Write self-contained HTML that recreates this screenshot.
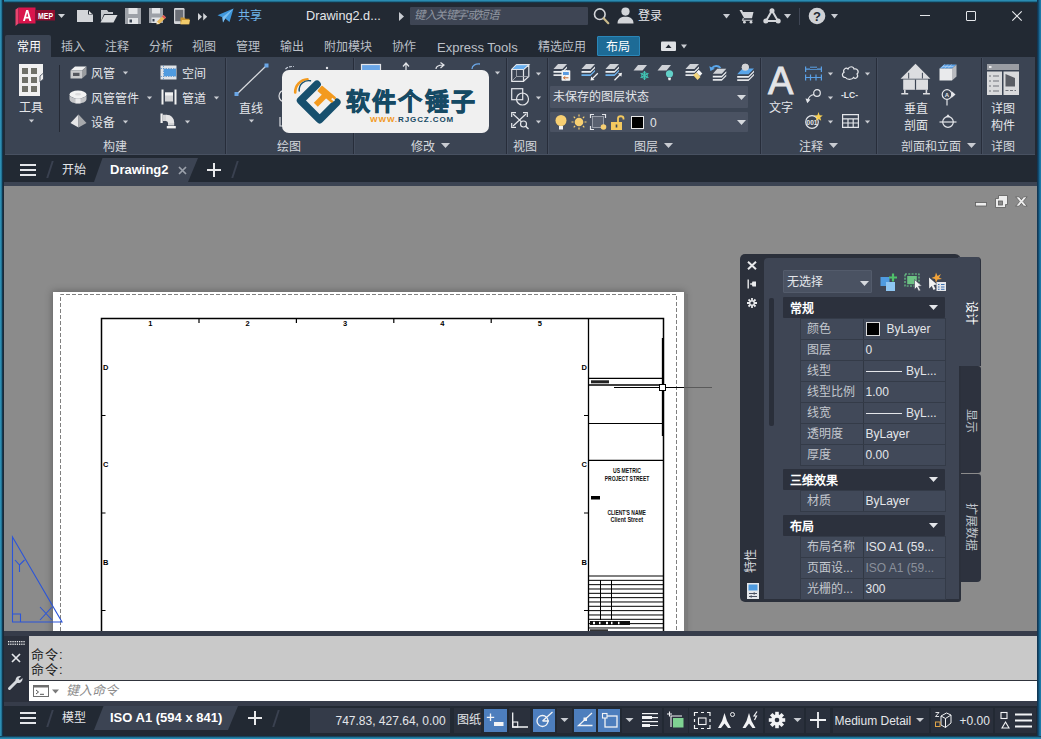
<!DOCTYPE html>
<html lang="zh-CN">
<head>
<meta charset="utf-8">
<title>Drawing2.dwg</title>
<style>
*{box-sizing:border-box;margin:0;padding:0}
html,body{width:1041px;height:739px;overflow:hidden;background:#222933}
body{font-family:"Liberation Sans",sans-serif;font-size:13px;color:#e6e8ec;position:relative}
.abs{position:absolute}
#win{position:absolute;left:0;top:0;width:1041px;height:739px;background:#222933;overflow:hidden}
#bT{left:0;top:0;width:1041px;height:3px;background:linear-gradient(to bottom,#2a8cb2 0,#2a8cb2 35%,#0f3f58 70%,#222933 100%)}
#bL{left:0;top:0;width:4px;height:739px;background:linear-gradient(to right,#2f93b8 0,#2a89ae 30%,#0f415c 55%,#18293a 80%,#222933 100%)}
#bR{left:1036.5px;top:0;width:4.5px;height:739px;background:linear-gradient(to right,#15304a 0,#0f3d5c 25%,#1a6a97 65%,#1f7fae 100%)}
#bB{left:0;top:736px;width:1041px;height:3px;background:linear-gradient(to bottom,#1b3347 0,#14506e 30%,#2583aa 60%,#2a8cb2 100%)}
#ribbon{left:5px;top:57px;width:1030px;height:97.500px;background:#3b4453}
#filetabs{left:4px;top:156px;width:1033px;height:26px;background:#222933}
#ftline{left:4px;top:182px;width:1033px;height:4px;background:#3c4453}
#draw{left:4px;top:186px;width:1033px;height:445px;background:#8b8b8b;overflow:hidden}
#cmd{left:3px;top:631px;width:1034px;height:75px;background:#363c4a}
#status{left:3px;top:706px;width:1034px;height:30px;background:#222933}

#title{left:3px;top:2px;width:1034px;height:33px;background:#222933}
.tt{position:absolute;white-space:nowrap;line-height:1}
.ico{position:absolute;overflow:visible}
#search{left:410px;top:6.5px;width:177.500px;height:18.500px;background:#3e4554;border-radius:1px}
#search span{position:absolute;left:4px;top:3.500px;font-size:11.500px;font-style:italic;color:#8f95a0;line-height:1;letter-spacing:-0.500px}
#rtabs{left:3px;top:35px;width:1034px;height:22px;background:#222933}
.rt{position:absolute;margin-top:1px;font-size:12px;color:#bcc0c8;line-height:1;white-space:nowrap}
#rtA{left:5px;top:35px;width:46px;height:22px;background:#3b4453;border-radius:2px 2px 0 0}
#rtL{left:597px;top:36px;width:43px;height:20px;background:#1d6b96;border:1px solid #2a86b8;border-radius:1px}

.rl{position:absolute;font-size:12px;color:#e4e6ea;line-height:1;white-space:nowrap}
.pt{position:absolute;top:140.5px;font-size:12px;color:#d6d9de;line-height:1;white-space:nowrap}
.sep{position:absolute;top:58px;width:2px;height:96px;background:linear-gradient(to right,#272d3a 0,#272d3a 50%,#444d5d 50%,#444d5d 100%)}
.dd{position:absolute;width:7px;height:4px}
.lyd{position:absolute;left:550px;width:198px;background:#4a5262;border-radius:1px}

.ham{position:absolute;width:16px;height:12px}
.ham i{position:absolute;left:0;width:16px;height:2px;background:#e4e6ea}
.slash{position:absolute;width:1.5px;height:17px;background:#3a4150;transform:skewX(-18deg)}

#pal{left:739.5px;top:254px;width:221.5px;height:347.700px;background:#2b303b;border-radius:5px 6px 3px 5px}
#palbody{left:764px;top:257.500px;width:195px;height:341.500px;background:#3e4554;border-radius:4px 0 0 0}
#ptab1{left:958px;top:257px;width:23px;height:109px;background:#3e4554;border-radius:0 4px 0 0;border-right:1px solid #2d323e}
#ptab2{left:960.500px;top:366px;width:20.500px;height:107px;background:#2d323e;border-radius:0 3px 3px 0}
#ptab3{left:960.500px;top:474px;width:20.500px;height:108px;background:#2d323e;border-radius:0 3px 4px 0}
.vt{position:absolute;font-size:12px;line-height:1;white-space:nowrap;color:#d6d9de}
.ph{position:absolute;left:783px;width:162px;height:21px;background:#2c313d;border-radius:1px}
.ph b{position:absolute;left:7px;top:5.5px;font-size:12px;line-height:1;color:#fff;font-weight:700}
.pr{position:absolute;left:801px;width:144px;height:20px;background:#414959;box-shadow:0 0 0 1px #343b48}
.pr i{position:absolute;left:61.5px;top:0;width:1px;height:20px;background:#313844}
.pr span{position:absolute;left:6px;top:3.5px;font-size:12px;line-height:1;color:#c3c7ce;white-space:nowrap;font-style:normal}
.pr em{position:absolute;left:64.5px;top:4px;font-size:12px;line-height:1;color:#e4e6ea;white-space:nowrap;font-style:normal}

.sbh{position:absolute;top:709px;height:23px;background:#4d7ebd}
.sbg{position:absolute;top:708px;height:25px;background:#2a303c}
.st{position:absolute;font-size:12px;line-height:1;color:#e4e6ea;white-space:nowrap}
</style>
</head>
<body>
<div id="win">

<div id="title" class="abs"></div>
<!-- app logo -->
<svg class="ico" style="left:14px;top:6px" width="56" height="22" viewBox="0 0 56 22">
 <path d="M1.5 3.5 L4.5 1.5 L4.5 17.5 L1.5 20 Z" fill="#e8446e"/>
 <rect x="4.5" y="1.5" width="17" height="16" fill="#d9154c"/>
 <path d="M21.5 4 H41 V14.5 H21.5 Z" fill="#8e0d30"/>
 <path d="M9 15 L12.2 4 H14.2 L17.4 15 H15.4 L14.7 12.5 H11.6 L10.9 15 Z M12.1 10.8 H14.3 L13.2 6.6 Z" fill="#fff"/>
 <text x="24" y="12.6" font-family="Liberation Sans, sans-serif" font-weight="700" font-size="8.5" fill="#fff" textLength="15" lengthAdjust="spacingAndGlyphs">MEP</text>
 <path d="M44 8 H51 L47.5 12 Z" fill="#d0d3d8"/>
</svg>
<!-- new -->
<svg class="ico" style="left:77px;top:10px" width="17" height="13" viewBox="0 0 17 13"><path d="M0 0 H11 L16 4.5 V12 H0 Z" fill="#d3d5d9"/><path d="M11 0 V4.5 H16 Z" fill="#222933"/><path d="M12 1 L15 4 H12 Z" fill="#e9eaec"/></svg>
<!-- open -->
<svg class="ico" style="left:100px;top:10px" width="18" height="13" viewBox="0 0 18 13"><path d="M1 0 H7 L8.5 2 H13 V4 H4 L1 11 Z" fill="#c5c8cd"/><path d="M4.5 5 H17.5 L13.5 12.5 H0.5 Z" fill="#d9dbde"/></svg>
<!-- save -->
<svg class="ico" style="left:125px;top:8px" width="16" height="16" viewBox="0 0 16 16"><path d="M0 0 H16 V16 H0 Z" fill="#9da1a8"/><rect x="3.5" y="0" width="9" height="6" fill="#e3e5e8"/><rect x="3" y="10" width="10" height="6" fill="#e3e5e8"/><rect x="4.5" y="11.5" width="2.5" height="3" fill="#3b4453"/></svg>
<!-- saveas -->
<svg class="ico" style="left:149px;top:8px" width="18" height="16" viewBox="0 0 18 16"><path d="M0 0 H14 V15 H0 Z" fill="#9da1a8"/><rect x="3" y="0" width="8" height="5.5" fill="#e3e5e8"/><rect x="2.5" y="9.5" width="9" height="5.5" fill="#e3e5e8"/><rect x="3.5" y="11" width="2" height="2.5" fill="#3b4453"/><path d="M8 13.5 L14.5 7 L17 9.5 L10.5 16 L7.5 16.3 Z" fill="#e9b85a"/><path d="M13 8.5 L14.5 7 L17 9.5 L15.5 11 Z" fill="#e0525a"/><path d="M8 13.5 L10.5 16 L7.5 16.3 Z" fill="#f2e6c8"/></svg>
<!-- mobile -->
<svg class="ico" style="left:174px;top:8px" width="16" height="17" viewBox="0 0 16 17"><rect x="0" y="0" width="10.5" height="16" rx="1.2" fill="#d3d5d9"/><rect x="1.2" y="1.8" width="8.1" height="11.4" fill="#6b6f77"/><path d="M6.5 9.5 H10.5 L11.5 10.8 H15.5 V16.3 H6.5 Z" fill="#c99530"/><path d="M8 12 H16 L14.8 16.3 H6.5 Z" fill="#f3cc6c"/></svg>
<!-- >> -->
<svg class="ico" style="left:198px;top:13px" width="10" height="8" viewBox="0 0 10 8"><path d="M0 0 L4 3.8 L0 7.6 Z M5.2 0 L9.2 3.8 L5.2 7.6 Z" fill="#d3d5d9"/></svg>
<!-- share -->
<svg class="ico" style="left:217px;top:8px" width="17" height="16" viewBox="0 0 17 16"><path d="M0.5 7.2 L16.5 0.5 L12.5 14 L8.2 10.4 L6 14.5 L5.4 9.2 Z" fill="#3f97dc"/><path d="M5.4 9.2 L16.5 0.5 L8.2 10.4 L6 14.5 Z" fill="#7dbff0"/></svg>
<div class="tt" style="left:238px;top:10px;font-size:12px;color:#6fb5ea">共享</div>
<div class="tt" style="left:306px;top:10px;font-size:12.700px;color:#e4e6ea">Drawing2.d...</div>
<svg class="ico" style="left:399px;top:12px" width="6" height="9" viewBox="0 0 6 9"><path d="M0 0 L5 4.5 L0 9 Z" fill="#c9ccd2"/></svg>
<div id="search" class="abs"><span>键入关键字或短语</span></div>
<!-- magnifier -->
<svg class="ico" style="left:593px;top:7px" width="17" height="18" viewBox="0 0 17 18"><circle cx="6.8" cy="7.2" r="5.3" fill="none" stroke="#d3d5d9" stroke-width="1.6"/><path d="M10.6 11.2 L15.3 16.2" stroke="#c9b98a" stroke-width="2.2" stroke-linecap="round"/></svg>
<!-- user -->
<svg class="ico" style="left:617px;top:7px" width="17" height="17" viewBox="0 0 17 17"><circle cx="8.5" cy="4.6" r="4.1" fill="#d3d5d9"/><path d="M0.5 16.5 C0.5 11.5 4 9.8 8.5 9.8 C13 9.8 16.5 11.5 16.5 16.5 Z" fill="#d3d5d9"/></svg>
<div class="tt" style="left:638px;top:10px;font-size:12px;color:#e4e6ea">登录</div>
<svg class="ico" style="left:723px;top:14px" width="7" height="5" viewBox="0 0 7 5"><path d="M0 0 H7 L3.5 4.4 Z" fill="#c9ccd2"/></svg>
<!-- cart -->
<svg class="ico" style="left:739px;top:9px" width="16" height="15" viewBox="0 0 16 15"><path d="M0.5 1 H3 L4 3 H14.5 L13 9.2 H5.2 Z" fill="#d3d5d9"/><path d="M4.4 9 L3.6 11.2 H13.5" stroke="#d3d5d9" stroke-width="1.1" fill="none"/><circle cx="5.4" cy="13.2" r="1.4" fill="#d3d5d9"/><circle cx="12" cy="13.2" r="1.4" fill="#d3d5d9"/></svg>
<!-- autodesk A -->
<svg class="ico" style="left:763px;top:8px" width="18" height="16" viewBox="0 0 18 16"><path d="M9 2.5 L3 13 H15 Z" fill="none" stroke="#d3d5d9" stroke-width="2"/><circle cx="9" cy="2.8" r="2.5" fill="#d3d5d9"/><circle cx="2.8" cy="13" r="2.5" fill="#d3d5d9"/><circle cx="15.2" cy="13" r="2.5" fill="#d3d5d9"/></svg>
<svg class="ico" style="left:784px;top:14px" width="7" height="5" viewBox="0 0 7 5"><path d="M0 0 H7 L3.5 4.4 Z" fill="#c9ccd2"/></svg>
<div class="abs" style="left:799px;top:8px;width:1px;height:17px;background:#3e4554"></div>
<!-- help -->
<svg class="ico" style="left:808px;top:7px" width="18" height="18" viewBox="0 0 18 18"><circle cx="9" cy="9" r="8.3" fill="#cfd1d5"/><text x="9" y="13.6" text-anchor="middle" font-family="Liberation Sans, sans-serif" font-weight="700" font-size="13" fill="#222933">?</text></svg>
<svg class="ico" style="left:831px;top:14px" width="7" height="5" viewBox="0 0 7 5"><path d="M0 0 H7 L3.5 4.4 Z" fill="#c9ccd2"/></svg>
<!-- window controls -->
<div class="abs" style="left:920px;top:15px;width:10px;height:1px;background:#e4e6ea"></div>
<div class="abs" style="left:966px;top:11px;width:10px;height:10px;border:1px solid #e4e6ea;border-radius:1px"></div>
<svg class="ico" style="left:1012px;top:11px" width="10" height="10" viewBox="0 0 10 10"><path d="M0.300 0.300 L9.700 9.700 M9.700 0.300 L0.300 9.700" stroke="#eceef1" stroke-width="1.100"/></svg>

<div id="rtabs" class="abs"></div>
<div id="rtA" class="abs"></div>
<div id="rtL" class="abs"></div>
<div class="rt" style="left:17px;top:40px;color:#fff">常用</div>
<div class="rt" style="left:61px;top:40px">插入</div>
<div class="rt" style="left:105px;top:40px">注释</div>
<div class="rt" style="left:149px;top:40px">分析</div>
<div class="rt" style="left:192px;top:40px">视图</div>
<div class="rt" style="left:236px;top:40px">管理</div>
<div class="rt" style="left:280px;top:40px">输出</div>
<div class="rt" style="left:324px;top:40px">附加模块</div>
<div class="rt" style="left:392px;top:40px">协作</div>
<div class="rt" style="left:437px;top:40px;font-size:13px">Express Tools</div>
<div class="rt" style="left:538px;top:40px">精选应用</div>
<div class="rt" style="left:606px;top:40px;color:#fff">布局</div>
<svg class="ico" style="left:661px;top:41px" width="30" height="11" viewBox="0 0 30 11"><rect x="0" y="0.5" width="15" height="9.5" rx="1" fill="#dfe1e5"/><path d="M4.5 7 L7.5 3.5 L10.5 7 Z" fill="#222933"/><path d="M20 3.5 H26 L23 7.5 Z" fill="#c9ccd2"/></svg>
<div id="ribbon" class="abs"></div>
<div class="sep" style="left:225px"></div>
<div class="sep" style="left:353px"></div>
<div class="sep" style="left:506px"></div>
<div class="sep" style="left:547px"></div>
<div class="sep" style="left:760px"></div>
<div class="sep" style="left:876px"></div>
<div class="sep" style="left:981px"></div>
<div class="abs" style="left:59px;top:65px;width:1px;height:67px;background:#252a35"></div>
<svg class="ico" style="left:18px;top:64px" width="26" height="32" viewBox="0 0 26 32">
<path d="M1 0 H25 V10 L22 13 V32 H1 Z" fill="#f0f0f0"/>
<path d="M22 12 L25.5 9 V15 L22 18 Z" fill="#f0f0f0" stroke="#3b4453" stroke-width="0.8"/>
<g fill="#6f7068"><rect x="4" y="4" width="6" height="6"/><rect x="13" y="4" width="6" height="6"/><rect x="4" y="13" width="6" height="6"/><rect x="13" y="13" width="6" height="6"/><rect x="4" y="22" width="6" height="6"/><rect x="13" y="22" width="6" height="6"/></g></svg>
<div class="rl" style="left:19px;top:102px">工具</div>
<svg class="ico" style="left:28px;top:119px" width="7" height="4" viewBox="0 0 7 4"><path d="M0.900 0.500 H6.100 L3.500 3.600 Z" fill="#c9ccd2"/></svg>
<svg class="ico" style="left:70px;top:66px" width="17" height="13" viewBox="0 0 17 13"><path d="M0.5 4.5 L5 0.5 H16.5 L12 4.5 Z" fill="#f2f2f2"/><path d="M0.5 4.5 H12 V12.5 H0.5 Z" fill="#c9cacc"/><path d="M12 4.5 L16.5 0.5 V8.5 L12 12.5 Z" fill="#9a9c9f"/><rect x="3" y="6.8" width="6.5" height="3.2" fill="#55585f"/></svg>
<div class="rl" style="left:91px;top:67.5px">风管</div>
<svg class="ico" style="left:122px;top:71px" width="7" height="4" viewBox="0 0 7 4"><path d="M0.900 0.500 H6.100 L3.500 3.600 Z" fill="#c9ccd2"/></svg>
<svg class="ico" style="left:69px;top:90px" width="18" height="14" viewBox="0 0 18 14"><ellipse cx="9" cy="4.5" rx="8.5" ry="4" fill="#f2f2f2"/><path d="M0.5 4.5 V9 C0.5 12 5 13.5 9 13.5 C13 13.5 17.5 12 17.5 9 V4.5 C17.5 7 13 8.5 9 8.5 C5 8.5 0.5 7 0.5 4.5 Z" fill="#c3c4c7"/><path d="M6.5 8.3 V13.3 H11.5 V8.3 Z" fill="#e9e9ea"/><ellipse cx="9" cy="4.3" rx="3" ry="1.3" fill="#dcdcdd"/></svg>
<div class="rl" style="left:91px;top:92.5px">风管管件</div>
<svg class="ico" style="left:146px;top:96px" width="7" height="4" viewBox="0 0 7 4"><path d="M0.900 0.500 H6.100 L3.500 3.600 Z" fill="#c9ccd2"/></svg>
<svg class="ico" style="left:70px;top:114px" width="17" height="14" viewBox="0 0 17 14"><path d="M8.5 0.5 L0.5 9 L8.5 13.5 Z" fill="#e6e6e7"/><path d="M8.5 0.5 L16.5 9 L8.5 13.5 Z" fill="#a7a9ac"/></svg>
<div class="rl" style="left:91px;top:116.5px">设备</div>
<svg class="ico" style="left:122px;top:120px" width="7" height="4" viewBox="0 0 7 4"><path d="M0.900 0.500 H6.100 L3.500 3.600 Z" fill="#c9ccd2"/></svg>
<svg class="ico" style="left:160px;top:65px" width="17" height="15" viewBox="0 0 17 15"><rect x="0.5" y="0.5" width="16" height="14" fill="#dfe3e8"/><rect x="4" y="4" width="12" height="7" fill="#4f9be0"/><path d="M0.5 3.5 H16.5 M0.5 11.5 H16.5 M3.5 0.5 V14.5" stroke="#5b8fc4" stroke-width="0.8" stroke-dasharray="1.5 1"/></svg>
<div class="rl" style="left:182px;top:67.5px">空间</div>
<svg class="ico" style="left:161px;top:89px" width="16" height="16" viewBox="0 0 16 16"><rect x="0.5" y="0.5" width="2" height="15" fill="#f2f2f2"/><rect x="13.5" y="0.5" width="2" height="15" fill="#f2f2f2"/><rect x="4" y="3.5" width="8" height="9" fill="#d2d3d5"/><rect x="4" y="3.5" width="8" height="3" fill="#f2f2f2"/></svg>
<div class="rl" style="left:182px;top:92.5px">管道</div>
<svg class="ico" style="left:213px;top:96px" width="7" height="4" viewBox="0 0 7 4"><path d="M0.900 0.500 H6.100 L3.500 3.600 Z" fill="#c9ccd2"/></svg>
<svg class="ico" style="left:160px;top:113px" width="18" height="16" viewBox="0 0 18 16"><rect x="0.5" y="0.5" width="2.2" height="9.5" fill="#f2f2f2"/><path d="M2.7 1.8 H6 C11 1.8 14.2 5 14.2 10 V12.5 H8 V10 C8 8.8 7.2 8 6 8 H2.7 Z" fill="#d2d3d5"/><path d="M6 1.8 C11 1.8 14.2 5 14.2 10 L8 10 C8 8.8 7.2 8 6 8 Z" fill="#f2f2f2" opacity=".55"/><rect x="6.8" y="13" width="9" height="2.4" fill="#f2f2f2"/></svg>
<svg class="ico" style="left:184px;top:120px" width="7" height="4" viewBox="0 0 7 4"><path d="M0.900 0.500 H6.100 L3.500 3.600 Z" fill="#c9ccd2"/></svg>
<div class="pt" style="left:103px">构建</div>
<svg class="ico" style="left:234px;top:63px" width="35" height="34" viewBox="0 0 35 34"><path d="M3 31 L32 3" stroke="#d9dbdf" stroke-width="1.2"/><rect x="0.5" y="29" width="4" height="4" fill="#6aa6e6"/><rect x="30.5" y="0.5" width="4" height="4" fill="#6aa6e6"/></svg>
<div class="rl" style="left:239px;top:102.5px">直线</div>
<svg class="ico" style="left:248px;top:119px" width="7" height="4" viewBox="0 0 7 4"><path d="M0.900 0.500 H6.100 L3.500 3.600 Z" fill="#c9ccd2"/></svg>
<svg class="ico" style="left:276px;top:60px" width="230" height="72" viewBox="0 0 230 72">
<path d="M9.500 9 C11.500 7 14 6.300 18 6.500" stroke="#cfd6e2" stroke-width="1.100" fill="none" stroke-dasharray="3 1.200"/>
<circle cx="51" cy="8" r="1.200" fill="#e4e6ea"/>
<circle cx="9" cy="36" r="6" fill="none" stroke="#d9dbdf" stroke-width="1.2"/>
<path d="M4 57 V66 H9" stroke="#d9dbdf" stroke-width="1.2" fill="none"/>
<rect x="85.5" y="4.5" width="19" height="10" fill="#6aa6e6" stroke="#e4e6ea" stroke-width="1.2"/>
<path d="M130 12 V4 M127 6.5 L130 3 L133 6.5" stroke="#e4e6ea" stroke-width="1.2" fill="none"/>
<path d="M160 9 C160 6 163 5 167 5 M164.500 2.500 L168 5 L164.500 8" stroke="#e4e6ea" stroke-width="1.2" fill="none"/>
<path d="M196 9 C196 5 200 3.500 204 4" stroke="#6aa6e6" stroke-width="1.3" fill="none"/>
</svg>
<svg class="ico" style="left:494px;top:71px" width="7" height="4" viewBox="0 0 7 4"><path d="M0.900 0.500 H6.100 L3.500 3.600 Z" fill="#c9ccd2"/></svg>
<div class="pt" style="left:277px">绘图</div>
<div class="pt" style="left:411px">修改</div>
<svg class="ico" style="left:441px;top:143px" width="9" height="5" viewBox="0 0 9 5"><path d="M0 0 H9 L4.5 5 Z" fill="#c9ccd2"/></svg>
<svg class="ico" style="left:511px;top:64px" width="19" height="18" viewBox="0 0 19 18"><path d="M0.7 5.5 H12.5 V17.3 H0.7 Z M0.7 5.5 L5.5 0.7 H17.800 L12.5 5.5 M17.800 0.7 V12.5 L12.5 17.3" fill="none" stroke="#e4e6ea" stroke-width="1.2"/><path d="M5.5 0.7 V12.5 H17.800 M5.5 12.5 L0.7 17.3" fill="none" stroke="#aeb2ba" stroke-width="0.8"/><path d="M0.700 5.500 L5.500 0.700 H17.800 L12.500 5.500 Z" fill="#6ab0f0" stroke="#e4e6ea" stroke-width="1"/></svg>
<svg class="ico" style="left:535px;top:72px" width="7" height="4" viewBox="0 0 7 4"><path d="M0.900 0.500 H6.100 L3.500 3.600 Z" fill="#c9ccd2"/></svg>
<svg class="ico" style="left:511px;top:88px" width="19" height="18" viewBox="0 0 19 18"><rect x="0.7" y="0.7" width="11" height="11" fill="none" stroke="#e4e6ea" stroke-width="1.2"/><circle cx="11.500" cy="11" r="6" fill="none" stroke="#e4e6ea" stroke-width="1.2"/></svg>
<svg class="ico" style="left:535px;top:96px" width="7" height="4" viewBox="0 0 7 4"><path d="M0.900 0.500 H6.100 L3.500 3.600 Z" fill="#c9ccd2"/></svg>
<svg class="ico" style="left:511px;top:112px" width="19" height="18" viewBox="0 0 19 18"><path d="M2 2 L15 14 M15 2 L2 14" stroke="#e4e6ea" stroke-width="1.2"/><path d="M0.7 5 V0.7 H5 M12 0.7 H16.300 V5 M0.7 11 V15.300 H5" stroke="#e4e6ea" stroke-width="1.2" fill="none"/><circle cx="12.500" cy="12" r="3" fill="#3b4453" stroke="#e4e6ea" stroke-width="1.2"/><path d="M14.700 14.300 L17.500 17" stroke="#e4e6ea" stroke-width="1.5"/></svg>
<svg class="ico" style="left:535px;top:120px" width="7" height="4" viewBox="0 0 7 4"><path d="M0.900 0.500 H6.100 L3.500 3.600 Z" fill="#c9ccd2"/></svg>
<div class="pt" style="left:513px">视图</div>
<svg class="ico" style="left:552.5px;top:63.5px" width="24" height="20" viewBox="0 0 24 20"><path d="M5 0 H14 L9.500 5 H0.500 Z" fill="#cfd2d7"/><path d="M1.600 5.600 L0.500 6.800 L2 8 H9.500 L13.800 3.300 L13.800 1.600 L9.800 6 Z" fill="#eef0f2" opacity="0"/><path d="M0.500 7 H9.500 L14 2.500 V4.200 L9.500 8.800 H0.500 Z" fill="#eceef1"/><path d="M0.500 10.200 H9.500 L14 5.700 V7.400 L9.500 12 H0.500 Z" fill="#e3e5e9"/><path d="M0.500 13.200 H8 V14.800 H0.500 Z" fill="#e3e5e9" opacity="0"/><rect x="8.500" y="6.300" width="8.800" height="10.500" rx="0.800" fill="#f4f5f6"/><rect x="10" y="8" width="5.800" height="3" fill="#5b9be0"/><path d="M10.500 13.800 H15.500 M10.500 13.800 L12.300 12.300 M10.500 13.800 L12.300 15.300" stroke="#c96a2b" stroke-width="1" fill="none"/></svg>
<svg class="ico" style="left:580.5px;top:63.5px" width="24" height="20" viewBox="0 0 24 20"><path d="M5 0 H14 L9.500 5 H0.500 Z" fill="#cfd2d7"/><path d="M1.600 5.600 L0.500 6.800 L2 8 H9.500 L13.800 3.300 L13.800 1.600 L9.800 6 Z" fill="#eef0f2" opacity="0"/><path d="M0.500 7 H9.500 L14 2.500 V4.200 L9.500 8.800 H0.500 Z" fill="#eceef1"/><path d="M0.500 10.200 H9.500 L14 5.700 V7.400 L9.500 12 H0.500 Z" fill="#6fb2ec"/><path d="M16.800 9.300 L10.500 15.600" stroke="#f0f1f3" stroke-width="1.300"/><path d="M9.500 16.600 L10.200 12.600 L13.500 15.900 Z" fill="#f0f1f3"/></svg>
<svg class="ico" style="left:604.5px;top:63.5px" width="24" height="20" viewBox="0 0 24 20"><path d="M5 0 H14 L9.500 5 H0.500 Z" fill="#cfd2d7"/><path d="M1.600 5.600 L0.500 6.800 L2 8 H9.500 L13.800 3.300 L13.800 1.600 L9.800 6 Z" fill="#eef0f2" opacity="0"/><path d="M0.500 7 H9.500 L14 2.500 V4.200 L9.500 8.800 H0.500 Z" fill="#eceef1"/><path d="M0.500 10.200 H9.500 L14 5.700 V7.400 L9.500 12 H0.500 Z" fill="#6fb2ec"/><path d="M9.500 16.300 L15.500 10.300" stroke="#f0f1f3" stroke-width="1.300"/><path d="M17 8.800 L16.300 12.800 L13 9.500 Z" fill="#f0f1f3"/></svg>
<svg class="ico" style="left:632.5px;top:64.8px" width="24" height="20" viewBox="0 0 24 20"><path d="M5 0 H14 L9.500 5.500 H0.500 Z" fill="#cfd2d7"/><g stroke="#41c4b4" stroke-width="1.300"><path d="M11.500 6 V15 M7.600 8.200 L15.400 12.800 M15.400 8.200 L7.600 12.800"/></g><circle cx="11.500" cy="10.500" r="2.900" fill="none" stroke="#41c4b4" stroke-width="1"/></svg>
<svg class="ico" style="left:656.8px;top:64.8px" width="24" height="20" viewBox="0 0 24 20"><path d="M5 0 H14 L9.500 5.500 H0.500 Z" fill="#cfd2d7"/><circle cx="12.500" cy="8.800" r="3.600" fill="#62d0c8"/><path d="M11 12.800 H14 L13.500 15.300 H11.500 Z" fill="#f4f5f6"/></svg>
<svg class="ico" style="left:684.8px;top:63.5px" width="24" height="20" viewBox="0 0 24 20"><path d="M5 0 H14 L9.500 5 H0.500 Z" fill="#cfd2d7"/><path d="M1.600 5.600 L0.500 6.800 L2 8 H9.500 L13.800 3.300 L13.800 1.600 L9.800 6 Z" fill="#eef0f2" opacity="0"/><path d="M0.500 7 H9.500 L14 2.500 V4.200 L9.500 8.800 H0.500 Z" fill="#eceef1"/><path d="M0.500 10.200 H9.500 L14 5.700 V7.400 L9.500 12 H0.500 Z" fill="#e3e5e9"/><path d="M12 7.500 L14 6 L17.300 9.500 L15 12 L12.500 10 Z" fill="#f4f5f6"/><path d="M8 11 L11.500 8.500 L15.500 13 L12.500 16 Z" fill="#f3d57c"/></svg>
<svg class="ico" style="left:708.5px;top:63.5px" width="24" height="22" viewBox="0 0 24 22"><path d="M3 4 C5 1.500 9 1 11.500 4" stroke="#5aa6ea" stroke-width="1.900" fill="none"/><path d="M0.300 2.300 L1.500 7 L5.800 4.800 Z" fill="#5aa6ea"/><g transform="translate(3.300 4.800)"><path d="M5 0 H14 L9.500 5 H0.500 Z" fill="#cfd2d7"/><path d="M1.600 5.600 L0.500 6.800 L2 8 H9.500 L13.800 3.300 L13.800 1.600 L9.800 6 Z" fill="#eef0f2" opacity="0"/><path d="M0.500 7 H9.500 L14 2.500 V4.200 L9.500 8.800 H0.500 Z" fill="#eceef1"/><path d="M0.500 10.200 H9.500 L14 5.700 V7.400 L9.500 12 H0.500 Z" fill="#e3e5e9"/></g></svg>
<svg class="ico" style="left:736.5px;top:62.5px" width="24" height="22" viewBox="0 0 24 22"><circle cx="8.300" cy="4.300" r="3.500" fill="#d2d3d6"/><path d="M5.500 5.500 H17 L11.500 11.300 H0.200 Z" fill="#5aa6ea"/><path d="M0.200 13 H11.500 L17 7.500 V9.200 L11.500 14.800 H0.200 Z" fill="#eceef1"/><path d="M0.200 16.200 H11.500 L17 10.700 V12.400 L11.500 18 H0.200 Z" fill="#e3e5e9"/><circle cx="8.300" cy="4.300" r="3.500" fill="#d2d3d6"/></svg>
<div class="lyd" style="top:86px;height:22px"></div>
<div class="rl" style="left:553px;top:91px">未保存的图层状态</div>
<svg class="ico" style="left:737px;top:95px" width="9" height="5" viewBox="0 0 9 5"><path d="M0 0 H9 L4.5 5 Z" fill="#d6d9de"/></svg>
<div class="lyd" style="top:112px;height:20px"></div>
<svg class="ico" style="left:554px;top:113px" width="110" height="19" viewBox="0 0 110 19">
<circle cx="7" cy="7.500" r="5.500" fill="#f7cf72"/><rect x="5" y="13" width="4" height="3.500" fill="#f2f2f2"/>
<circle cx="25" cy="9" r="4.300" fill="#f7cf72"/><g stroke="#f7cf72" stroke-width="1.200"><path d="M25 1.500 V3.500 M25 14.500 V16.500 M17.500 9 H19.500 M30.500 9 H32.500 M19.700 3.700 L21.100 5.100 M28.900 12.900 L30.300 14.300 M30.300 3.700 L28.900 5.100 M21.100 12.900 L19.700 14.300"/></g>
<rect x="38.500" y="3.500" width="11" height="11" fill="#5a6170" stroke="#c9ccd2" stroke-width="0.600"/><path d="M36.500 5 V1.500 H40 M48 1.500 H51.500 V5 M36.500 13 V16.500 H40" stroke="#e4e6ea" stroke-width="1.200" fill="none"/><circle cx="49.500" cy="14" r="2.800" fill="#f7cf72"/>
<rect x="57" y="9" width="11" height="8" fill="#f4c95f"/><path d="M64 9 V5.500 C64 2.500 69.500 2.500 69.500 5.500 V6.500" stroke="#f4c95f" stroke-width="1.800" fill="none"/><rect x="61.700" y="11.500" width="1.600" height="3" fill="#3b4453"/>
<rect x="77.500" y="3.500" width="12" height="12" fill="#000" stroke="#e9e9e9" stroke-width="1"/>
</svg>
<div class="rl" style="left:650px;top:117px;font-size:12px">0</div>
<svg class="ico" style="left:737px;top:120px" width="9" height="5" viewBox="0 0 9 5"><path d="M0 0 H9 L4.5 5 Z" fill="#d6d9de"/></svg>
<div class="pt" style="left:634px">图层</div>
<svg class="ico" style="left:664px;top:143px" width="9" height="5" viewBox="0 0 9 5"><path d="M0 0 H9 L4.5 5 Z" fill="#c9ccd2"/></svg>
<div class="abs" style="left:768px;top:61.500px;font-size:38px;line-height:1;color:#e3e4e7;-webkit-text-stroke:0.900px #e3e4e7;font-weight:400;transform:scaleX(1.0);transform-origin:left">A</div>
<div class="rl" style="left:769px;top:101.5px">文字</div>
<svg class="ico" style="left:805px;top:66px" width="17" height="15" viewBox="0 0 17 15"><g stroke="#5aa0e6" stroke-width="1.200" fill="none"><path d="M0.600 0.500 V6 M16.400 0.500 V6 M0.600 3.200 H16.400 M0.600 8.500 V14.500 M16.400 8.500 V14.500 M5.500 8.500 V14.500 M11 8.500 V14.500 M0.600 11.500 H16.400"/></g><path d="M5 1.500 H12" stroke="#3b4453" stroke-width="3"/><path d="M5 1.200 H12" stroke="#5aa0e6" stroke-width="1"/></svg>
<svg class="ico" style="left:827px;top:72px" width="7" height="4" viewBox="0 0 7 4"><path d="M0.900 0.500 H6.100 L3.500 3.600 Z" fill="#c9ccd2"/></svg>
<svg class="ico" style="left:805px;top:89px" width="17" height="15" viewBox="0 0 17 15"><circle cx="12" cy="4" r="3.300" fill="none" stroke="#e4e6ea" stroke-width="1.200"/><path d="M9 5.500 C5 6 3 9 2.500 13" stroke="#e4e6ea" stroke-width="1.200" fill="none"/><path d="M0.500 9.500 L2.300 14.300 L5.500 10.500 Z" fill="#e4e6ea"/></svg>
<svg class="ico" style="left:827px;top:96px" width="7" height="4" viewBox="0 0 7 4"><path d="M0.900 0.500 H6.100 L3.500 3.600 Z" fill="#c9ccd2"/></svg>
<svg class="ico" style="left:804px;top:112px" width="19" height="17" viewBox="0 0 19 17"><circle cx="8" cy="10" r="6.300" fill="none" stroke="#e4e6ea" stroke-width="1.200"/><text x="8" y="12.500" text-anchor="middle" font-size="6.500" font-family="Liberation Sans, sans-serif" font-weight="700" fill="#e4e6ea">001</text><path d="M14.500 0 L15.600 3.200 L18.800 3.500 L16.300 5.500 L17.200 8.800 L14.500 6.900 L11.800 8.800 L12.700 5.500 L10.200 3.500 L13.400 3.200 Z" fill="#f7cf52"/></svg>
<svg class="ico" style="left:827px;top:120px" width="7" height="4" viewBox="0 0 7 4"><path d="M0.900 0.500 H6.100 L3.500 3.600 Z" fill="#c9ccd2"/></svg>
<svg class="ico" style="left:841px;top:65px" width="19" height="16" viewBox="0 0 19 16"><path d="M4.500 12.500 C1 12.500 0.500 8.500 3 7.500 C1.500 4.500 5 2 7 4 C8 1 12.500 1 13 4 C16.500 3 18.500 7 16 9 C18 12 14.500 14.500 12.500 12.500 C11 15 6 15 4.500 12.500 Z" fill="none" stroke="#e4e6ea" stroke-width="1.200"/></svg>
<svg class="ico" style="left:864px;top:72px" width="7" height="4" viewBox="0 0 7 4"><path d="M0.900 0.500 H6.100 L3.500 3.600 Z" fill="#c9ccd2"/></svg>
<div class="abs" style="left:841px;top:91px;font-size:8.5px;font-weight:700;color:#e4e6ea;line-height:1;letter-spacing:0">-LC-</div>
<svg class="ico" style="left:842px;top:114px" width="17" height="14" viewBox="0 0 17 14"><path d="M0.600 0.600 H16.400 V13.400 H0.600 Z M0.600 4.800 H16.400 M0.600 9 H16.400 M6 4.800 V13.400 M11.200 4.800 V13.400" fill="none" stroke="#e4e6ea" stroke-width="1.200"/></svg>
<svg class="ico" style="left:864px;top:120px" width="7" height="4" viewBox="0 0 7 4"><path d="M0.900 0.500 H6.100 L3.500 3.600 Z" fill="#c9ccd2"/></svg>
<div class="pt" style="left:799px">注释</div>
<svg class="ico" style="left:829px;top:143px" width="9" height="5" viewBox="0 0 9 5"><path d="M0 0 H9 L4.5 5 Z" fill="#c9ccd2"/></svg>
<svg class="ico" style="left:900px;top:63px" width="31" height="32" viewBox="0 0 31 32"><path d="M15.500 0.800 L0.600 15.700 H30.400 Z" fill="#dcdde0"/><path d="M8.700 9.800 V15.500 M22.400 9.800 V15.500" stroke="#3b4453" stroke-width="1"/><rect x="3.200" y="16.500" width="24.800" height="10.300" fill="#dcdde0"/><path d="M15.500 16.500 V26.800" stroke="#3b4453" stroke-width="1.200"/><path d="M4.800 26.800 V30.600 M26.400 26.800 V30.600" stroke="#dcdde0" stroke-width="1.600"/><path d="M1.300 30.800 H8.200 M23 30.800 H29.900" stroke="#dcdde0" stroke-width="1.600"/></svg>
<div class="rl" style="left:904px;top:102.5px">垂直</div>
<div class="rl" style="left:904px;top:119.5px">剖面</div>
<svg class="ico" style="left:939px;top:64px" width="18" height="17" viewBox="0 0 18 17"><path d="M0.500 4.500 L5 0.500 H17.500 L13 4.500 Z" fill="#5aa0e6"/><path d="M0.500 4.500 H13 V16.500 H0.500 Z" fill="#e9eaec"/><path d="M13 4.500 L17.500 0.500 V12.500 L13 16.500 Z" fill="#b9bbc0"/><path d="M3.500 2.500 H14.500 M5.500 0.500 L2 4.500 M9 0.500 L5.500 4.500 M12.500 0.500 L9 4.500" stroke="#bcd8f5" stroke-width="0.600"/></svg>
<svg class="ico" style="left:940px;top:88px" width="16" height="18" viewBox="0 0 16 18"><circle cx="7" cy="6.500" r="4.800" fill="none" stroke="#e4e6ea" stroke-width="1.200"/><path d="M11.500 3 L15.500 6.500 L11.500 10 Z" fill="#e4e6ea"/><path d="M7 11.300 V17.500" stroke="#e4e6ea" stroke-width="1.200"/><text x="7" y="9" text-anchor="middle" font-size="6" font-weight="700" font-family="Liberation Sans, sans-serif" fill="#e4e6ea">A</text></svg>
<svg class="ico" style="left:939px;top:114px" width="18" height="15" viewBox="0 0 18 15"><circle cx="9" cy="8" r="5.300" fill="none" stroke="#e4e6ea" stroke-width="1.200"/><path d="M0.500 8 H17.500" stroke="#e4e6ea" stroke-width="1.200"/><path d="M6.500 3.300 L9 0.300 L11.500 3.300 Z" fill="#e4e6ea"/></svg>
<div class="pt" style="left:901px">剖面和立面</div>
<svg class="ico" style="left:967px;top:143px" width="9" height="5" viewBox="0 0 9 5"><path d="M0 0 H9 L4.5 5 Z" fill="#c9ccd2"/></svg>
<svg class="ico" style="left:987px;top:64px" width="32" height="31" viewBox="0 0 32 31"><rect x="0" y="0" width="32" height="6" fill="#9a9da3"/><rect x="2" y="2" width="2.500" height="2" fill="#e9eaec"/><rect x="0" y="7.500" width="15" height="23.500" fill="#d9dadc"/><rect x="16.500" y="7.500" width="15.500" height="23.500" fill="#d9dadc"/><g stroke="#70737a" stroke-width="1.200"><path d="M2 12 H4 M6 12 H12 M2 17 H4 M6 17 H12 M2 22 H4 M6 22 H12 M2 27 H4 M6 27 H12"/></g><path d="M18.500 10 L28 14 V22.500 H18.500 Z" fill="#5a5d64"/><path d="M18.500 26.500 H29" stroke="#70737a" stroke-width="1.200" stroke-dasharray="3 1.500"/></svg>
<div class="rl" style="left:991px;top:102.5px">详图</div>
<div class="rl" style="left:991px;top:119.5px">构件</div>
<div class="pt" style="left:991px">详图</div>
<div class="abs" style="left:282px;top:70px;width:207px;height:63px;background:#f0f0f0;border-radius:7px"></div>
<svg class="ico" style="left:290px;top:74px" width="56" height="54" viewBox="0 0 56 54">
<path d="M5.200 18.500 A13 13 0 0 1 17.500 5.200" fill="none" stroke="#f39a1e" stroke-width="2.600" stroke-linecap="round"/>
<path d="M9.200 17 A9.500 9.500 0 0 1 20.500 6.800" fill="none" stroke="#17506e" stroke-width="1.400" stroke-linecap="round"/>
<path d="M27 10.300 L10.600 26.500 L29.700 45.600 L46.800 28.300" fill="none" stroke="#17506e" stroke-width="7.600" stroke-linecap="round" stroke-linejoin="round"/>
<g transform="translate(36.800 20.300) rotate(40)"><rect x="-9.500" y="-3.600" width="19" height="7.200" rx="1" fill="#f39a1e"/><rect x="6.500" y="-1" width="3.500" height="2" fill="#f0f0f0"/></g>
<path d="M34.500 22 L25.800 30.800" stroke="#f39a1e" stroke-width="5.600" stroke-linecap="butt"/>
</svg>
<div class="abs" style="left:346px;top:89.500px;font-size:24px;font-weight:900;color:#164a64;line-height:1;white-space:nowrap;letter-spacing:2.2px;-webkit-text-stroke:0.9px #164a64">软件个锤子</div>
<div class="abs" style="left:370px;top:116px;font-size:8px;font-weight:700;color:#164a64;line-height:1;white-space:nowrap;letter-spacing:0.9px"><span style="color:#f39a1e">WWW.</span>RJGCZ.COM</div>

<div class="abs" style="left:5px;top:153.500px;width:1030px;height:1px;background:#485161"></div>
<div id="filetabs" class="abs"></div>
<div class="ham" style="left:20px;top:164px"><i style="top:0"></i><i style="top:5px"></i><i style="top:10px"></i></div>
<div class="slash" style="left:49px;top:161px"></div>
<div class="rl" style="left:62px;top:164px">开始</div>
<svg class="ico" style="left:92px;top:158px" width="108" height="24" viewBox="0 0 108 24"><path d="M10.500 0 H106 L96 24 H2 Z" fill="#3c4453"/></svg>
<div class="tt" style="left:110px;top:163px;font-size:13px;font-weight:700;color:#fff">Drawing2</div>
<svg class="ico" style="left:178px;top:166px" width="9" height="9" viewBox="0 0 9 9"><path d="M1 1 L8 8 M8 1 L1 8" stroke="#9ba1ab" stroke-width="1.700"/></svg>
<svg class="ico" style="left:207px;top:163px" width="14" height="14" viewBox="0 0 14 14"><path d="M7 0 V14 M0 7 H14" stroke="#e9eaec" stroke-width="2"/></svg>
<div class="slash" style="left:234px;top:161px"></div>

<div id="ftline" class="abs"></div>
<div id="draw" class="abs"><div style="position:absolute;left:49px;top:106px;width:631px;height:400px;background:#fff;box-shadow:0 0 7px 1px rgba(0,0,0,.28)"></div></div>
<svg class="ico" style="left:4px;top:186px" width="1033" height="445" viewBox="4 186 1033 445" shape-rendering="auto">
<rect x="56" y="294" width="632" height="340" fill="#7c7c7c"/>
<rect x="53" y="292" width="631" height="340" fill="#fff"/>
<path d="M60.500 631 V294.500 H676.500 V631" fill="none" stroke="#808080" stroke-width="1" stroke-dasharray="4 2"/>
<path d="M101.500 631 V318.500 H663.500 V631" fill="none" stroke="#000" stroke-width="1.500"/>
<path d="M588.500 318.500 V631" stroke="#000" stroke-width="1.300"/>
<text x="150.3" y="326.300" text-anchor="middle" font-size="7.500" font-family="Liberation Sans, sans-serif" font-weight="700" fill="#000">1</text>
<text x="247.7" y="326.300" text-anchor="middle" font-size="7.500" font-family="Liberation Sans, sans-serif" font-weight="700" fill="#000">2</text>
<text x="345" y="326.300" text-anchor="middle" font-size="7.500" font-family="Liberation Sans, sans-serif" font-weight="700" fill="#000">3</text>
<text x="442.4" y="326.300" text-anchor="middle" font-size="7.500" font-family="Liberation Sans, sans-serif" font-weight="700" fill="#000">4</text>
<text x="539.8" y="326.300" text-anchor="middle" font-size="7.500" font-family="Liberation Sans, sans-serif" font-weight="700" fill="#000">5</text>
<path d="M199 318.500 V323" stroke="#000" stroke-width="1.200"/>
<path d="M296.4 318.500 V323" stroke="#000" stroke-width="1.200"/>
<path d="M393.8 318.500 V323" stroke="#000" stroke-width="1.200"/>
<path d="M491.2 318.500 V323" stroke="#000" stroke-width="1.200"/>
<text x="103" y="370.2" font-size="7.500" font-family="Liberation Sans, sans-serif" font-weight="700" fill="#000">D</text>
<text x="581.500" y="370.2" font-size="7.500" font-family="Liberation Sans, sans-serif" font-weight="700" fill="#000">D</text>
<text x="103" y="467.4" font-size="7.500" font-family="Liberation Sans, sans-serif" font-weight="700" fill="#000">C</text>
<text x="581.500" y="467.4" font-size="7.500" font-family="Liberation Sans, sans-serif" font-weight="700" fill="#000">C</text>
<text x="103" y="565" font-size="7.500" font-family="Liberation Sans, sans-serif" font-weight="700" fill="#000">B</text>
<text x="581.500" y="565" font-size="7.500" font-family="Liberation Sans, sans-serif" font-weight="700" fill="#000">B</text>
<path d="M101.500 415.5 H105.500 M584 415.5 H588.500" stroke="#000" stroke-width="1.200"/>
<path d="M101.500 513 H105.500 M584 513 H588.500" stroke="#000" stroke-width="1.200"/>
<path d="M101.500 610.5 H105.500 M584 610.5 H588.500" stroke="#000" stroke-width="1.200"/>
<path d="M588.500 378.3 H663.500" stroke="#000" stroke-width="1.200"/>
<path d="M588.500 385 H663.500" stroke="#000" stroke-width="1.500"/>
<path d="M588.500 423.5 H663.500" stroke="#000" stroke-width="1.200"/>
<path d="M588.500 460.3 H663.500" stroke="#000" stroke-width="1.200"/>
<rect x="591" y="380.300" width="18" height="3" fill="#222"/>
<text x="627" y="473.3" text-anchor="middle" font-size="6.5" font-family="Liberation Sans, sans-serif" font-weight="700" fill="#111" textLength="28" lengthAdjust="spacingAndGlyphs">US METRIC</text>
<text x="627" y="481" text-anchor="middle" font-size="6.5" font-family="Liberation Sans, sans-serif" font-weight="700" fill="#111" textLength="44.5" lengthAdjust="spacingAndGlyphs">PROJECT STREET</text>
<rect x="591" y="496" width="9" height="3.500" fill="#000"/>
<text x="626.7" y="515.2" text-anchor="middle" font-size="6.5" font-family="Liberation Sans, sans-serif" font-weight="700" fill="#111" textLength="38.5" lengthAdjust="spacingAndGlyphs">CLIENT'S NAME</text>
<text x="626.8" y="522" text-anchor="middle" font-size="6.5" font-family="Liberation Sans, sans-serif" font-weight="700" fill="#111" textLength="32.5" lengthAdjust="spacingAndGlyphs">Client Street</text>
<path d="M588.500 576.00 H663.500" stroke="#000" stroke-width="1"/>
<path d="M588.500 580.33 H663.500" stroke="#000" stroke-width="1"/>
<path d="M588.500 584.66 H663.500" stroke="#000" stroke-width="1"/>
<path d="M588.500 588.99 H663.500" stroke="#000" stroke-width="1"/>
<path d="M588.500 593.32 H663.500" stroke="#000" stroke-width="1"/>
<path d="M588.500 597.65 H663.500" stroke="#000" stroke-width="1"/>
<path d="M588.500 601.98 H663.500" stroke="#000" stroke-width="1"/>
<path d="M588.500 606.31 H663.500" stroke="#000" stroke-width="1"/>
<path d="M588.500 610.64 H663.500" stroke="#000" stroke-width="1"/>
<path d="M588.500 614.97 H663.500" stroke="#000" stroke-width="1"/>
<path d="M588.500 619.30 H663.500" stroke="#000" stroke-width="1"/>
<path d="M588.500 623.63 H663.500" stroke="#000" stroke-width="1"/>
<path d="M588.500 627.96 H663.500" stroke="#000" stroke-width="1"/>
<path d="M600.500 580 V620 M611.500 580 V620" stroke="#000" stroke-width="1" shape-rendering="crispEdges"/>
<rect x="590" y="621" width="40" height="4" fill="#111"/>
<g fill="#fff"><rect x="593" y="621.800" width="2" height="2.400"/><rect x="599" y="621.800" width="1.500" height="2.400"/><rect x="606" y="621.800" width="2" height="2.400"/><rect x="611" y="621.800" width="1.500" height="2.400"/><rect x="618" y="621.800" width="1.500" height="2.400"/></g>
<rect x="590" y="629.300" width="18" height="2" fill="#333"/>
<path d="M614 387.500 H684" stroke="#000" stroke-width="1.100"/>
<path d="M684 387.500 H712" stroke="#5a5a5a" stroke-width="1"/>
<path d="M662.500 338 V436" stroke="#000" stroke-width="1.300"/>
<rect x="659.500" y="384.500" width="6" height="6" fill="#fff" stroke="#000" stroke-width="1"/>
<g fill="none" stroke="#2b55d9" stroke-width="1.100"><path d="M12.500 537 V622 H62 Z"/><path d="M12.500 614 H20.500 V622"/><path d="M15 560 L19.500 565 L24.500 560 M19.500 565 V572"/><path d="M40 607 L52 620 M52 607 L40 620"/></g>
<g stroke="#5c5c5c" stroke-width="0.800" fill="#ededed"><rect x="975.500" y="202.500" width="11" height="3.500"/><path d="M998.500 195.500 H1007.500 V204.500 H1005.500 V207.500 H995.500 V198.500 H998.500 Z"/><rect x="998.500" y="201" width="4" height="4" fill="#8b8b8b"/><path d="M1015.700 196.800 H1019.200 L1021.400 199.700 L1023.600 196.800 H1027.100 L1023.200 201.500 L1027.100 206.200 H1023.600 L1021.400 203.300 L1019.200 206.200 H1015.700 L1019.600 201.500 Z"/></g>
</svg>
<div id="pal" class="abs"></div><div id="palbody" class="abs"></div><div id="ptab2" class="abs"></div><div id="ptab3" class="abs"></div><div id="ptab1" class="abs"></div>
<svg class="ico" style="left:747px;top:261px" width="10" height="9" viewBox="0 0 10 9"><path d="M1 0.800 L9 8.200 M9 0.800 L1 8.200" stroke="#e9eaec" stroke-width="2"/></svg>
<svg class="ico" style="left:747px;top:279px" width="10" height="10" viewBox="0 0 10 10"><path d="M1.200 0.500 V9.500" stroke="#e9eaec" stroke-width="1.400"/><path d="M3 5 H6" stroke="#e9eaec" stroke-width="1.200"/><path d="M5.500 2.500 H9 V7.500 H5.500 L4.500 5 Z" fill="#e9eaec"/></svg>
<svg class="ico" style="left:747px;top:298px" width="10" height="10" viewBox="0 0 10 10"><g stroke="#e9eaec" stroke-width="1.800"><path d="M5 0 V10 M0 5 H10 M1.500 1.500 L8.500 8.500 M8.500 1.500 L1.500 8.500"/></g><circle cx="5" cy="5" r="1.600" fill="#2b303b"/></svg>
<div class="vt" style="left:745px;top:555px;transform:rotate(-90deg);transform-origin:center;width:24px;height:12px;margin-left:-6px">特性</div>
<svg class="ico" style="left:747px;top:583px" width="12" height="16" viewBox="0 0 12 16"><rect x="0" y="0" width="12" height="16" fill="#e4e6ea"/><rect x="1.500" y="1.500" width="9" height="6" fill="#4f9be0"/><path d="M2 10.500 H10 M2 13.500 H10" stroke="#4a5060" stroke-width="1"/><rect x="6.500" y="9.500" width="1.500" height="2" fill="#4a5060"/><rect x="3.500" y="12.500" width="1.500" height="2" fill="#4a5060"/></svg>
<div class="vt" style="left:958.500px;top:306.500px;transform:rotate(90deg);width:24px;height:12px;color:#fff">设计</div>
<div class="vt" style="left:958.500px;top:415px;transform:rotate(90deg);width:24px;height:12px;color:#bfc3ca">显示</div>
<div class="vt" style="left:946.500px;top:521px;transform:rotate(90deg);width:48px;height:12px;color:#bfc3ca">扩展数据</div>
<div class="abs" style="left:769px;top:298px;width:5px;height:128px;background:#2a2f3a;border-radius:2px"></div>
<div class="abs" style="left:783px;top:270px;width:89px;height:23px;background:#4a5262;border:1px solid #535b6b;border-radius:1px"></div>
<div class="rl" style="left:787px;top:276px">无选择</div>
<svg class="ico" style="left:860px;top:281px" width="9" height="5" viewBox="0 0 9 5"><path d="M0 0 H9 L4.5 5 Z" fill="#d6d9de"/></svg>
<svg class="ico" style="left:880px;top:273px" width="18" height="18" viewBox="0 0 18 18"><rect x="0.500" y="4" width="9" height="9" fill="#4f9be0"/><rect x="6" y="9" width="9" height="9" fill="#8ec6f2"/><path d="M13 0.500 V8.500 M9 4.500 H17" stroke="#4fc16a" stroke-width="2.200"/></svg>
<svg class="ico" style="left:904px;top:273px" width="19" height="19" viewBox="0 0 19 19"><rect x="1" y="1" width="14" height="12" fill="none" stroke="#6fd58c" stroke-width="1.100" stroke-dasharray="2 1.300"/><rect x="3.200" y="3" width="9.600" height="8.200" fill="#6cc283"/><path d="M10.500 6.500 L17.800 13 L14.500 13.300 L16.500 17.300 L14.700 18.200 L12.800 14.300 L10.500 16.500 Z" fill="#f2f2f2" stroke="#3e4554" stroke-width="0.600"/></svg>
<svg class="ico" style="left:928px;top:272px" width="19" height="20" viewBox="0 0 19 20"><path d="M8 0.500 L9.500 4 L13 2 L11 5.500 L14 7 L9.500 7.500 L8 10.500 L7 7 L3.500 6 L7 4.500 Z" fill="#f2a33a"/><path d="M1 5.500 L9 12.500 L5.500 13 L7.500 17 L5.500 18 L3.800 14 L1.200 16.500 Z" fill="#f2f2f2"/><rect x="8.500" y="10" width="9.500" height="9" fill="#e4e6ea"/><path d="M10 12.500 H11.500 M13 12.500 H16.500 M10 15 H11.500 M13 15 H16.500 M10 17.300 H11.500 M13 17.300 H16.500" stroke="#3a6fb0" stroke-width="1"/></svg>
<div class="ph" style="top:297px"><b>常规</b></div><svg class="ico" style="left:929px;top:305px" width="9" height="5" viewBox="0 0 9 5"><path d="M0 0 H9 L4.5 5 Z" fill="#e4e6ea"/></svg>
<div class="pr" style="top:319px"><i></i><span>颜色</span><u style="position:absolute;left:65px;top:3px;width:14px;height:14px;background:#000;border:1px solid #dcdcdc"></u><em style="left:85.500px">ByLayer</em></div>
<div class="pr" style="top:340px"><i></i><span>图层</span><em>0</em></div>
<div class="pr" style="top:361px"><i></i><span>线型</span><u style="position:absolute;left:65px;top:10px;width:36px;height:1px;background:#e4e6ea"></u><em style="left:105px">ByL...</em></div>
<div class="pr" style="top:382px"><i></i><span>线型比例</span><em>1.00</em></div>
<div class="pr" style="top:403px"><i></i><span>线宽</span><u style="position:absolute;left:65px;top:10px;width:36px;height:1px;background:#e4e6ea"></u><em style="left:105px">ByL...</em></div>
<div class="pr" style="top:424px"><i></i><span>透明度</span><em>ByLayer</em></div>
<div class="pr" style="top:445px"><i></i><span>厚度</span><em>0.00</em></div>
<div class="ph" style="top:469px"><b>三维效果</b></div><svg class="ico" style="left:929px;top:477px" width="9" height="5" viewBox="0 0 9 5"><path d="M0 0 H9 L4.5 5 Z" fill="#e4e6ea"/></svg>
<div class="pr" style="top:491px"><i></i><span>材质</span><em>ByLayer</em></div>
<div class="ph" style="top:515px"><b>布局</b></div><svg class="ico" style="left:929px;top:523px" width="9" height="5" viewBox="0 0 9 5"><path d="M0 0 H9 L4.5 5 Z" fill="#e4e6ea"/></svg>
<div class="pr" style="top:537px"><i></i><span>布局名称</span><em>ISO A1 (59...</em></div>
<div class="pr" style="top:558px"><i></i><span>页面设...</span><em style="color:#8a909b">ISO A1 (59...</em></div>
<div class="pr" style="top:579px"><i></i><span>光栅的...</span><em>300</em></div>
<div id="cmd" class="abs"></div>
<div class="abs" style="left:3px;top:636px;width:26px;height:66px;background:#2b303c"></div>
<div class="abs" style="left:29px;top:636px;width:1008px;height:44px;background:#c9c9c9"></div>
<div class="abs" style="left:29px;top:680px;width:1008px;height:1px;background:#30343c"></div>
<div class="abs" style="left:29px;top:681px;width:1008px;height:20px;background:#fff"></div>
<svg class="ico" style="left:8px;top:641px" width="17" height="4" viewBox="0 0 17 4"><g fill="#e9eaec"><rect x="0.0" y="0" width="1.3" height="1.3"/><rect x="0.0" y="2.6" width="1.3" height="1.3"/><rect x="2.2" y="0" width="1.3" height="1.3"/><rect x="2.2" y="2.6" width="1.3" height="1.3"/><rect x="4.4" y="0" width="1.3" height="1.3"/><rect x="4.4" y="2.6" width="1.3" height="1.3"/><rect x="6.6" y="0" width="1.3" height="1.3"/><rect x="6.6" y="2.6" width="1.3" height="1.3"/><rect x="8.8" y="0" width="1.3" height="1.3"/><rect x="8.8" y="2.6" width="1.3" height="1.3"/><rect x="11.0" y="0" width="1.3" height="1.3"/><rect x="11.0" y="2.6" width="1.3" height="1.3"/><rect x="13.2" y="0" width="1.3" height="1.3"/><rect x="13.2" y="2.6" width="1.3" height="1.3"/><rect x="15.4" y="0" width="1.3" height="1.3"/><rect x="15.4" y="2.6" width="1.3" height="1.3"/></g></svg>
<svg class="ico" style="left:11px;top:653px" width="10" height="10" viewBox="0 0 10 10"><path d="M1 1 L9 9 M9 1 L1 9" stroke="#e4e6ea" stroke-width="1.700"/></svg>
<svg class="ico" style="left:7px;top:675px" width="17" height="16" viewBox="0 0 17 16"><path d="M2.500 13.500 L9.500 6.500" stroke="#d6d9de" stroke-width="3" stroke-linecap="round"/><path d="M15.500 3 C16 6 13.500 8.500 10.500 8 C8.500 7.600 8 5 9 3.200 C10 1.400 12 0.700 14 1.200 L11.500 3.800 L12.800 5.200 Z" fill="#d6d9de"/></svg>
<div class="abs" style="left:31px;top:648px;font-size:13px;font-weight:300;line-height:14.500px;color:#000;letter-spacing:1px;white-space:nowrap;-webkit-text-stroke:0.15px #c9c9c9">命令:<br>命令:</div>
<svg class="ico" style="left:33px;top:685px" width="27" height="12" viewBox="0 0 27 12"><rect x="0.500" y="0.500" width="15" height="11" fill="#fff" stroke="#6e6e6e" stroke-width="1"/><rect x="0.500" y="0.500" width="15" height="2" fill="#6e6e6e"/><path d="M3 5 L5.500 7 L3 9 M7 9.300 H11" stroke="#555" stroke-width="1" fill="none"/><path d="M19 4.500 H26 L22.500 8.500 Z" fill="#7a7a7a"/></svg>
<div class="abs" style="left:66px;top:684px;font-size:13px;line-height:1;color:#8c8c8c;font-style:italic;white-space:nowrap">键入命令</div>
<div id="status" class="abs"></div>
<div class="ham" style="left:20px;top:712px"><i style="top:0"></i><i style="top:5px"></i><i style="top:10px"></i></div>
<div class="slash" style="left:49px;top:710px"></div>
<div class="rl" style="left:62px;top:712px">模型</div>
<svg class="ico" style="left:92px;top:706px" width="148" height="24" viewBox="0 0 148 24"><path d="M2 24 H136 L146 0 H11.500 Z" fill="#3c4453"/></svg>
<div class="tt" style="left:110px;top:711px;font-size:13px;font-weight:700;color:#fff">ISO A1 (594 x 841)</div>
<svg class="ico" style="left:248px;top:711px" width="14" height="14" viewBox="0 0 14 14"><path d="M7 0 V14 M0 7 H14" stroke="#e9eaec" stroke-width="2"/></svg>
<div class="slash" style="left:275px;top:710px"></div>
<div class="abs" style="left:310px;top:708px;width:140px;height:25px;background:#343b49"></div>
<div class="st" style="left:335.5px;top:714.5px">747.83, 427.64, 0.00</div>
<div class="sbg" style="left:454px;width:27px"></div><div class="sbg" style="left:509px;width:21px"></div><div class="sbg" style="left:557px;width:15px"></div><div class="sbg" style="left:622px;width:15px"></div><div class="sbg" style="left:637px;width:25px"></div><div class="sbg" style="left:664px;width:24px"></div><div class="sbg" style="left:689px;width:74px"></div><div class="sbg" style="left:765px;width:39px"></div><div class="sbg" style="left:806px;width:24px"></div><div class="sbg" style="left:833px;width:96px"></div><div class="sbg" style="left:931px;width:62px"></div><div class="sbg" style="left:995px;width:41px"></div><div class="rl" style="left:457px;top:714px">图纸</div>
<div class="sbh" style="left:484px;width:23px"></div>
<div class="sbh" style="left:533px;width:22px"></div>
<div class="sbh" style="left:574px;width:22px"></div>
<div class="sbh" style="left:598px;width:22px"></div>
<svg class="ico" style="left:450px;top:706px" width="587" height="30" viewBox="450 706 587 30">
<path d="M490.500 713.500 V721 M486.800 717.300 H494.200" stroke="#f2f3f5" stroke-width="1.300"/><rect x="494" y="722" width="9.500" height="4" fill="#f2f3f5"/>
<path d="M512.700 712.500 V727 H528" stroke="#f2f3f5" stroke-width="1.300" fill="none"/><rect x="512.700" y="722" width="5" height="5" fill="none" stroke="#f2f3f5" stroke-width="1.100"/>
<circle cx="542.500" cy="721" r="5.500" fill="none" stroke="#f2f3f5" stroke-width="1.300"/><path d="M542.500 721 L552.500 712 M542.500 721 H549" stroke="#f2f3f5" stroke-width="1.300"/>
<path d="M560.500 718 H568.500 L564.500 722 Z" fill="#c9ccd2"/>
<path d="M592 713 L578.500 725.500 H592.500" stroke="#f2f3f5" stroke-width="1.300" fill="none"/><rect x="583.500" y="717.500" width="3.500" height="3.500" fill="#f2f3f5"/>
<rect x="605" y="716" width="12" height="11" fill="none" stroke="#f2f3f5" stroke-width="1.300"/><rect x="602.500" y="713.500" width="4.500" height="4.500" fill="#4d7ebd" stroke="#f2f3f5" stroke-width="1.100"/>
<path d="M625.500 718 H633.500 L629.500 722 Z" fill="#c9ccd2"/>
<g fill="#f2f3f5"><rect x="642" y="713" width="16" height="1.200"/><rect x="642" y="716" width="10" height="3"/><rect x="652" y="717" width="6" height="1.200"/><rect x="642" y="721" width="16" height="1.200"/><rect x="642" y="724" width="8" height="3"/><rect x="650" y="725" width="8" height="1"/></g>
<path d="M669.500 711.500 V716.500 M667 714 H672" stroke="#f2f3f5" stroke-width="1.100"/><path d="M671 727 V716 H682" stroke="#f2f3f5" stroke-width="1.100" fill="none"/><rect x="673" y="718" width="10.500" height="9.500" fill="#7fd392"/>
<path d="M694.500 716 V712.500 H698 M701 712.500 H704 M707 712.500 H710 V716 M710 719 V722 M710 725 V728.500 H707 M704 728.500 H701 M698 728.500 H694.500 V725 M694.500 722 V719" stroke="#f2f3f5" stroke-width="1.200" fill="none"/><rect x="698.500" y="718" width="7.500" height="6.500" fill="none" stroke="#f2f3f5" stroke-width="1.100"/>
<path d="M724.5 713 L727 721 L731 728 L728 728 L724.5 723.500 L721 728 L718 728 L722 721 Z" fill="#f2f3f5"/><circle cx="732.500" cy="714.500" r="2" fill="none" stroke="#f2f3f5" stroke-width="1"/>
<path d="M749.0 713 L751.5 721 L755.5 728 L752.5 728 L749.0 723.500 L745.5 728 L742.5 728 L746.5 721 Z" fill="#f2f3f5"/><path d="M757 711.500 L754 716 L756.500 716 L754.500 720" stroke="#f2f3f5" stroke-width="1.200" fill="none"/>
<g transform="translate(777 720)"><rect x="-1.800" y="-8.200" width="3.600" height="16.400" fill="#f2f3f5" transform="rotate(0)"/><rect x="-1.800" y="-8.200" width="3.600" height="16.400" fill="#f2f3f5" transform="rotate(45)"/><rect x="-1.800" y="-8.200" width="3.600" height="16.400" fill="#f2f3f5" transform="rotate(90)"/><rect x="-1.800" y="-8.200" width="3.600" height="16.400" fill="#f2f3f5" transform="rotate(135)"/><circle r="5.800" fill="#f2f3f5"/><circle r="2.300" fill="#2a303c"/></g>
<path d="M793.500 718 H801.500 L797.500 722 Z" fill="#c9ccd2"/>
<path d="M818 712 V728 M810 720 H826" stroke="#f2f3f5" stroke-width="1.800"/>
<path d="M916 718 H924 L920 722 Z" fill="#c9ccd2"/>
<path d="M941 716 L946.500 713 L951 715 V723 L945.500 727.500 L941 725 Z M941 716 L945.500 718.500 L951 715 M945.500 718.500 V727.500" fill="none" stroke="#f2f3f5" stroke-width="1"/><rect x="935.500" y="722" width="4.500" height="4.500" fill="none" stroke="#e0a54a" stroke-width="1"/><path d="M935.500 712.500 H939 L935.500 716.500 H939" stroke="#f2f3f5" stroke-width="0.900" fill="none"/>
<rect x="1001" y="712.500" width="6" height="6" fill="none" stroke="#f2f3f5" stroke-width="1.100"/><path d="M1005.500 722 L1009 728 H1002 Z" fill="none" stroke="#f2f3f5" stroke-width="1.100"/>
<path d="M1015 714.500 H1032 M1015 720.500 H1032 M1015 726.500 H1032" stroke="#f2f3f5" stroke-width="2"/>
</svg>
<div class="st" style="left:834.5px;top:714.5px">Medium Detail</div>
<div class="st" style="left:959.5px;top:714.5px">+0.00</div>
<div id="bT" class="abs"></div><div id="bL" class="abs"></div><div id="bR" class="abs"></div><div id="bB" class="abs"></div>
</div>
</body>
</html>
